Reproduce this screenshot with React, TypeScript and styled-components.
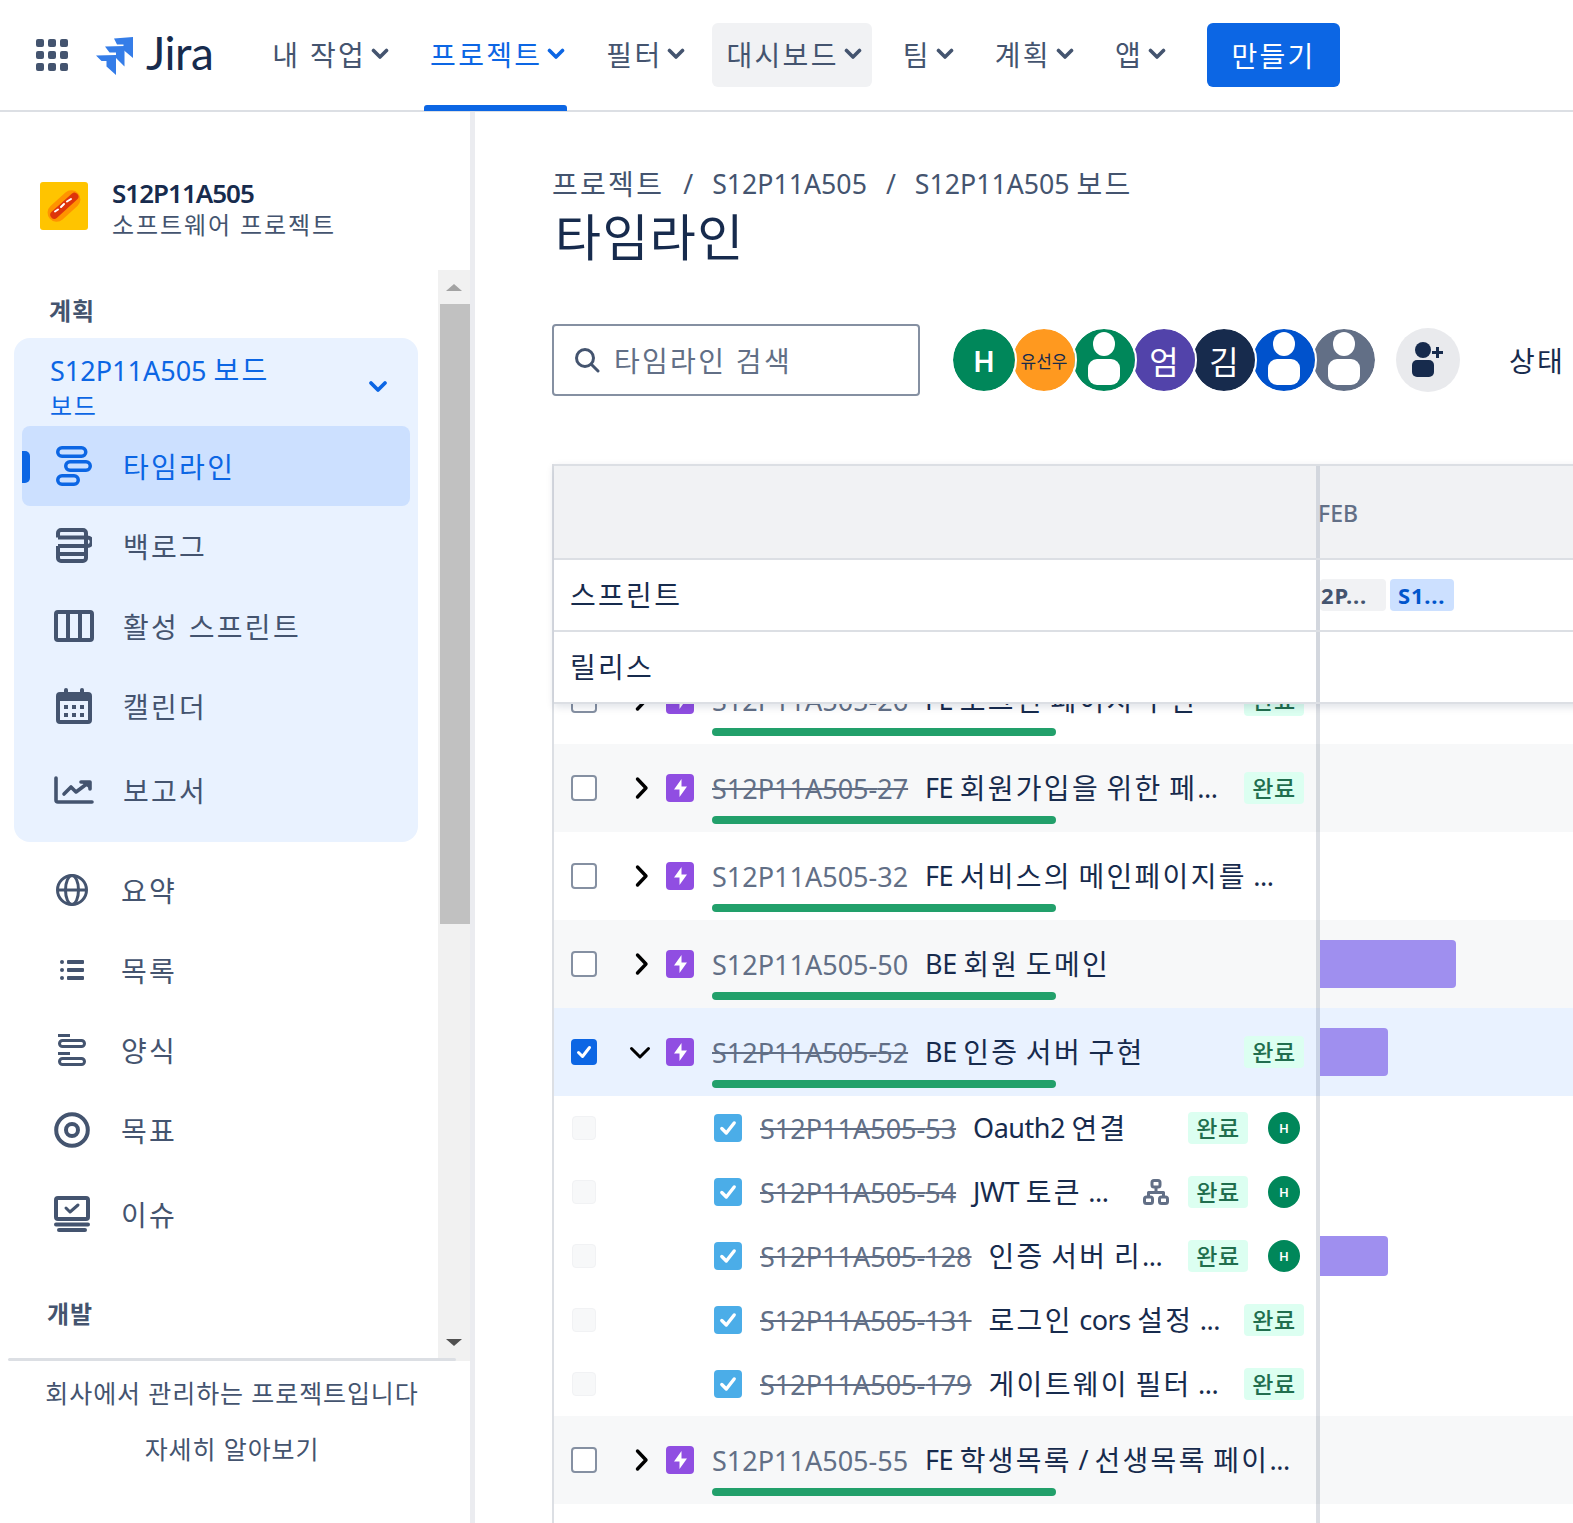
import React from "react";
import styled, { createGlobalStyle } from "styled-components";

const GlobalStyle = createGlobalStyle`
  html, body {
    margin: 0;
    padding: 0;
    background: #fff;
    font-family: "Noto Sans", "Noto Sans CJK KR", sans-serif;
    color: #172b4d;
  }
  * { box-sizing: border-box; }
`;

const Page = styled.div`
  width: 1573px;
  height: 1523px;
  overflow: hidden;
  display: flex;
  flex-direction: column;
`;

/* ---------- top bar ---------- */

const TopBar = styled.header`
  height: 112px;
  flex: none;
  display: flex;
  align-items: flex-start;
  padding: 23px 0 0 36px;
  border-bottom: 2px solid #dcdfe4;
`;

const AppGrid = styled.svg`
  width: 32px;
  height: 32px;
  margin: 16px 28px 0 0;
  flex: none;
`;

const Brand = styled.div`
  display: flex;
  align-items: center;
  height: 64px;
  gap: 12px;
  margin-right: 45px;
`;

const LogoMark = styled.svg`
  width: 38px;
  height: 38px;
  margin-top: 2px;
`;

const Wordmark = styled.span`
  padding-bottom: 4px;
  font-family: Lato, "Noto Sans", sans-serif;
  font-size: 46px;
  font-weight: 400;
  color: #172b4d;
  letter-spacing: -0.5px;
  line-height: 1;
`;

const NavList = styled.nav`
  display: flex;
  align-items: flex-start;
  gap: 17px;
`;

const NavItem = styled.div<{ $active?: boolean; $hover?: boolean }>`
  position: relative;
  display: flex;
  align-items: center;
  height: 64px;
  padding: 0 10px 2px 14px;
  gap: 5px;
  border-radius: 6px;
  font-size: 28px;
  letter-spacing: 2.3px;
  color: ${(p) => (p.$active ? "#0c66e4" : "#44546f")};
  background: ${(p) => (p.$hover ? "#f1f2f4" : "transparent")};
`;

const ActiveLine = styled.span`
  position: absolute;
  left: 8px;
  right: 8px;
  top: 82px;
  height: 6px;
  border-radius: 3px 3px 0 0;
  background: #0c66e4;
`;

const CreateButton = styled.button`
  width: 133px;
  height: 64px;
  margin-left: 31px;
  padding-bottom: 2px;
  border: 0;
  border-radius: 6px;
  background: #0c66e4;
  color: #fff;
  font: inherit;
  font-size: 28px;
  letter-spacing: 2.3px;
`;

/* ---------- layout ---------- */

const Body = styled.div`
  flex: 1;
  min-height: 0;
  display: flex;
`;

const Sidebar = styled.aside`
  width: 475px;
  flex: none;
  display: flex;
  flex-direction: column;
  border-right: 5px solid #ebecf0;
`;

const ProjectHead = styled.div`
  height: 158px;
  flex: none;
  display: flex;
  align-items: flex-start;
  padding: 70px 0 0 40px;
  gap: 24px;
`;

const ProjectLogo = styled.svg`
  width: 48px;
  height: 48px;
  flex: none;
`;

const ProjectText = styled.div`
  display: flex;
  flex-direction: column;
  margin-top: -4px;
`;

const ProjectName = styled.div`
  font-size: 26px;
  font-weight: 600;
  line-height: 30px;
  letter-spacing: -1px;
`;

const ProjectKind = styled.div`
  margin-top: 4px;
  font-size: 24px;
  line-height: 26px;
  letter-spacing: 1.9px;
  color: #44546f;
  white-space: nowrap;
`;

const NavScroller = styled.div`
  position: relative;
  height: 1091px;
  flex: none;
  display: flex;
  overflow: hidden;
`;

const NavContent = styled.div`
  width: 438px;
  flex: none;
  padding: 21px 0 0 14px;
`;

const SectionLabel = styled.div<{ $left: number; $gap?: number }>`
  height: 36px;
  margin-top: ${(p) => p.$gap ?? 0}px;
  padding: 2px 0 0 ${(p) => p.$left}px;
  font-size: 24px;
  font-weight: 700;
  line-height: 36px;
  letter-spacing: 0.8px;
  color: #44546f;
`;

const BoardGroup = styled.div`
  width: 404px;
  height: 504px;
  margin-top: 11px;
  padding: 8px 8px 0;
  border-radius: 16px;
  background: #e9f2ff;
`;

const BoardHead = styled.div`
  position: relative;
  height: 80px;
  padding: 5px 0 0 28px;
  color: #0c66e4;
`;

const BoardTitle = styled.div`
  font-size: 27px;
  line-height: 38px;
`;

const KoRun = styled.span`
  font-size: 28px;
  letter-spacing: 2.3px;
`;

const BoardSub = styled.div`
  font-size: 24px;
  line-height: 32px;
  letter-spacing: 1.6px;
`;

const BoardChevron = styled.svg`
  position: absolute;
  right: 22px;
  top: 34px;
  width: 20px;
  height: 14px;
`;

const BoardItem = styled.div<{ $active?: boolean; $height?: number }>`
  position: relative;
  display: flex;
  align-items: center;
  width: 388px;
  height: ${(p) => p.$height ?? 80}px;
  padding-left: 30px;
  border-radius: 8px;
  font-size: 28px;
  letter-spacing: 2.3px;
  color: ${(p) => (p.$active ? "#0c66e4" : "#44546f")};
  background: ${(p) => (p.$active ? "#cce0ff" : "transparent")};
`;

const ActiveMark = styled.span`
  position: absolute;
  left: 0;
  top: 25px;
  width: 8px;
  height: 32px;
  border-radius: 0 5px 5px 0;
  background: #0c66e4;
`;

const IconSlot = styled.span`
  width: 44px;
  height: 44px;
  flex: none;
  display: flex;
  align-items: center;
  justify-content: center;
  margin-right: 27px;
`;

const PlainItems = styled.div`
  padding-top: 8px;
`;

const PlainItem = styled.div<{ $height: number }>`
  display: flex;
  align-items: center;
  height: ${(p) => p.$height}px;
  padding-left: 36px;
  font-size: 28px;
  letter-spacing: 2.3px;
  color: #44546f;
`;

const Scrollbar = styled.div`
  position: relative;
  width: 32px;
  flex: none;
  display: flex;
  flex-direction: column;
  align-items: flex-end;
  background: #f1f1f1;
`;

const ScrollTop = styled.div`
  height: 34px;
  width: 100%;
  flex: none;
  display: flex;
  align-items: center;
  justify-content: center;
`;

const ScrollThumb = styled.div`
  width: 30px;
  height: 620px;
  flex: none;
  background: #c1c1c1;
`;

const ScrollDown = styled.div`
  margin-top: auto;
  height: 40px;
  width: 100%;
  display: flex;
  align-items: flex-start;
  justify-content: center;
  padding-top: 18px;
`;

const Arrow = styled.span<{ $down?: boolean }>`
  width: 0;
  height: 0;
  border-left: 8px solid transparent;
  border-right: 8px solid transparent;
  ${(p) => (p.$down ? "border-top: 7px solid #505050;" : "border-bottom: 7px solid #a3a3a3;")}
`;

const ScrollDivider = styled.div`
  position: absolute;
  left: 8px;
  bottom: 0;
  width: 448px;
  height: 3px;
  border-radius: 2px;
  background: #dcdfe4;
`;

const Foot = styled.div`
  padding-top: 4px;
  width: 464px;
  text-align: center;
  font-size: 25px;
  line-height: 56px;
  letter-spacing: 0.9px;
  color: #44546f;
  white-space: nowrap;
`;

/* ---------- main ---------- */

const Main = styled.main`
  flex: 1;
  min-width: 0;
  padding: 49px 0 0 77px;
`;

const Crumbs = styled.div`
  display: flex;
  align-items: center;
  height: 44px;
  font-size: 26.7px;
  color: #44546f;
  white-space: nowrap;
`;

const CrumbSep = styled.span`
  padding: 0 19px;
`;

const PageTitle = styled.h1`
  margin: 1px 0 0 3px;
  height: 62px;
  font-size: 50px;
  font-weight: 400;
  line-height: 62px;
  letter-spacing: 1.4px;
`;

const Toolbar = styled.div`
  display: flex;
  align-items: center;
  height: 72px;
  margin-top: 56px;
`;

const SearchBox = styled.div`
  width: 368px;
  height: 72px;
  flex: none;
  display: flex;
  align-items: center;
  gap: 14px;
  padding-left: 20px;
  border: 2px solid #8590a2;
  border-radius: 4px;
  font-size: 28px;
  letter-spacing: 2.3px;
  color: #626f86;
`;

const AvatarRow = styled.div`
  display: flex;
  margin-left: 31px;
`;

const Avatar = styled.div<{ $bg: string; $z: number; $small?: boolean; $dark?: boolean; $strong?: boolean }>`
  position: relative;
  z-index: ${(p) => p.$z};
  width: 66px;
  height: 66px;
  margin-right: -6px;
  flex: none;
  display: flex;
  align-items: center;
  justify-content: center;
  overflow: hidden;
  border-radius: 50%;
  border: 2px solid #fff;
  background: ${(p) => p.$bg};
  background-clip: padding-box;
  font-size: ${(p) => (p.$small ? 17 : p.$strong ? 29 : 32)}px;
  font-weight: ${(p) => (p.$strong ? 600 : 400)};
  color: ${(p) => (p.$dark ? "#172b4d" : "#fff")};
`;

const AddUser = styled.div`
  width: 64px;
  height: 64px;
  flex: none;
  margin-left: 25px;
  display: flex;
  align-items: center;
  justify-content: center;
  border-radius: 50%;
  background: #e9eaed;
`;

const StatusLabel = styled.div`
  margin-left: 49px;
  font-size: 28px;
  letter-spacing: 2.3px;
  white-space: nowrap;
`;

const Timeline = styled.section`
  margin-top: 68px;
  width: 1100px;
  height: 1100px;
  border-left: 2px solid #dcdfe4;
  display: flex;
  flex-direction: column;
`;

const Sticky = styled.div`
  position: relative;
  z-index: 2;
  flex: none;
  background: #fff;
  border-top: 2px solid #dcdfe4;
  box-shadow: 0 3px 8px rgba(9, 30, 66, 0.13);
`;

const HeadRow = styled.div<{ $height: number; $grey?: boolean }>`
  display: flex;
  height: ${(p) => p.$height}px;
  border-bottom: 2px solid #dcdfe4;
  background: ${(p) => (p.$grey ? "#f1f2f4" : "#fff")};
`;

const HeadName = styled.div`
  width: 766px;
  flex: none;
  display: flex;
  align-items: center;
  padding: 0 0 2px 16px;
  border-right: 4px solid #d3d7de;
  font-size: 28px;
  letter-spacing: 2.3px;
`;

const HeadSide = styled.div`
  flex: 1;
  display: flex;
  align-items: center;
`;

const Month = styled.span`
  margin: 2px 0 0 -2px;
  font-size: 23px;
  font-weight: 500;
  color: #626f86;
`;

const SprintChip = styled.span<{ $current?: boolean }>`
  height: 32px;
  display: flex;
  align-items: center;
  flex: none;
  border-radius: 4px;
  font-size: 22px;
  font-weight: 700;
  letter-spacing: 0.8px;
  background: ${(p) => (p.$current ? "#cce0ff" : "#f1f2f4")};
  color: ${(p) => (p.$current ? "#0055cc" : "#44546f")};
  width: ${(p) => (p.$current ? 64 : 66)}px;
  margin-left: ${(p) => (p.$current ? 4 : 0)}px;
  padding-left: ${(p) => (p.$current ? 8 : 1)}px;
`;

const Rows = styled.div`
  flex: 1;
  min-height: 0;
  overflow: hidden;
`;

const RowFrame = styled.div<{ $tone: string; $height: number }>`
  display: flex;
  align-items: flex-end;
  height: ${(p) => p.$height}px;
  overflow: hidden;
  background: ${(p) => p.$tone};
`;

const RowCell = styled.div<{ $height: number }>`
  width: 766px;
  flex: none;
  display: flex;
  height: ${(p) => p.$height}px;
  border-right: 4px solid rgba(9, 30, 66, 0.14);
`;

const EpicCell = styled(RowCell)`
  padding: 28px 12px 8px 17px;
`;

const ChildCell = styled(RowCell)`
  align-items: center;
  padding: 0 12px 0 18px;
`;

const SideCell = styled.div<{ $height: number }>`
  flex: 1;
  height: ${(p) => p.$height}px;
  display: flex;
  align-items: center;
`;

const TimeBar = styled.div<{ $w: number; $h: number }>`
  width: ${(p) => p.$w}px;
  height: ${(p) => p.$h}px;
  border-radius: 0 4px 4px 0;
  background: #9f8fef;
`;

const EpicControls = styled.div`
  height: 32px;
  flex: none;
  display: flex;
  align-items: center;
`;

const EmptyBox = styled.span`
  width: 26px;
  height: 26px;
  flex: none;
  border: 2px solid #8590a2;
  border-radius: 4px;
  background: #fff;
`;

const CheckedBox = styled.span`
  width: 26px;
  height: 26px;
  flex: none;
  display: flex;
  align-items: center;
  justify-content: center;
  border-radius: 4px;
  background: #0c66e4;
`;

const FadedBox = styled.span`
  width: 24px;
  height: 24px;
  flex: none;
  margin-right: 118px;
  border: 1px solid #f1f2f4;
  border-radius: 4px;
  background: #f7f8f9;
`;

const Toggle = styled.span<{ $open?: boolean }>`
  width: 69px;
  flex: none;
  display: flex;
  justify-content: center;
  padding: ${(p) => (p.$open ? "2px 4px 0 21px" : "0 0 0 21px")};
`;

const EpicIcon = styled.span`
  width: 28px;
  height: 28px;
  flex: none;
  margin-right: 18px;
  display: flex;
  align-items: center;
  justify-content: center;
  border-radius: 4px;
  background: #904ee2;
`;

const TaskIcon = styled.span`
  width: 28px;
  height: 28px;
  flex: none;
  margin-right: 18px;
  display: flex;
  align-items: center;
  justify-content: center;
  border-radius: 4px;
  background: #4bade8;
`;

const EpicBody = styled.div`
  flex: 1;
  min-width: 0;
`;

const Line = styled.div`
  display: flex;
  align-items: center;
  height: 32px;
  width: 100%;
`;

const IssueKey = styled.span<{ $done?: boolean }>`
  flex: none;
  margin-right: 17px;
  font-size: 27px;
  color: #626f86;
  white-space: nowrap;
  text-decoration: ${(p) => (p.$done ? "line-through" : "none")};
`;

const Summary = styled.span`
  flex: 1;
  min-width: 0;
  padding-bottom: 2px;
  font-size: 28px;
  letter-spacing: 2.3px;
  white-space: pre;
`;

const LatinRun = styled.span`
  font-size: 27px;
  letter-spacing: -0.5px;
  vertical-align: 1px;
`;

const Progress = styled.div`
  width: 344px;
  height: 8px;
  margin-top: 12px;
  border-radius: 4px;
  background: #22a06b;
`;

const Lozenge = styled.span`
  width: 60px;
  height: 32px;
  flex: none;
  display: flex;
  align-items: center;
  justify-content: center;
  padding-bottom: 2px;
  border-radius: 4px;
  background: #dcfff1;
  color: #216e4e;
  font-size: 23px;
  font-weight: 500;
  letter-spacing: 0.6px;
`;

const TinyAvatar = styled.span`
  width: 32px;
  height: 32px;
  flex: none;
  margin: 0 4px 0 20px;
  display: flex;
  align-items: center;
  justify-content: center;
  border-radius: 50%;
  background: #00875a;
  color: #fff;
  font-size: 13px;
  font-weight: 600;
`;

const LinkIcon = styled.svg`
  width: 26px;
  height: 26px;
  flex: none;
  margin-right: 19px;
`;

/* ---------- icons ---------- */

const Chevron = ({ color = "#44546f" }: { color?: string }) => (
  <svg width="18" height="12" viewBox="0 0 18 12" fill="none">
    <path d="M2.500 2.500 9 9l6.500-6.500" stroke={color} strokeWidth="3.600" strokeLinecap="round" strokeLinejoin="round" />
  </svg>
);

const JiraMark = () => (
  <LogoMark viewBox="0 0 38 38" fill="#357de8">
    <path d="M18 1.500 37 0v21l-9.500-8V7.500h-6.500z" />
    <path d="M9 9.500 28.500 9v20.500L20 21v-5.500h-6.500z" />
    <path d="M0 18.500 20 18v20l-9.500-8.500V24H5.500z" />
  </LogoMark>
);

const iconColor = "#44546f";

const TimelineIcon = () => (
  <svg width="36" height="40" viewBox="0 0 36 40" fill="none" stroke="#0c66e4" strokeWidth="3.500">
    <rect x="1.750" y="1.750" width="28" height="8.500" rx="4.250" />
    <rect x="9.750" y="15.750" width="24.500" height="8.500" rx="4.250" />
    <rect x="1.750" y="29.750" width="20.500" height="8.500" rx="4.250" />
  </svg>
);

const BacklogIcon = () => (
  <svg width="36" height="36" viewBox="0 0 36 36" fill="none" stroke={iconColor} strokeWidth="4">
    <path d="M2 9.500V5a3 3 0 0 1 3-3h22a3 3 0 0 1 3 3v25a3 3 0 0 1-3 3H5a3 3 0 0 1-3-3V18" />
    <path d="M2 9.500h29.500a4.250 4.250 0 0 1 0 8.500H2" />
    <path d="M2 26h28" />
  </svg>
);

const BoardIcon = () => (
  <svg width="40" height="32" viewBox="0 0 40 32" fill="none" stroke={iconColor} strokeWidth="4" strokeLinejoin="round">
    <rect x="2" y="2" width="36" height="28" rx="2" />
    <path d="M14 2v28M26 2v28" />
  </svg>
);

const CalendarIcon = () => (
  <svg width="36" height="36" viewBox="0 0 36 36" fill="none">
    <path d="M2 12V7a2 2 0 0 1 2-2h28a2 2 0 0 1 2 2v5" fill={iconColor} />
    <rect x="2" y="6" width="32" height="28" rx="2" stroke={iconColor} strokeWidth="4" />
    <rect x="2" y="6" width="32" height="7" fill={iconColor} />
    <rect x="8" y="0" width="4" height="6" rx="2" fill={iconColor} />
    <rect x="24" y="0" width="4" height="6" rx="2" fill={iconColor} />
    <g fill={iconColor}>
      <rect x="8" y="17" width="4" height="4" />
      <rect x="16" y="17" width="4" height="4" />
      <rect x="24" y="17" width="4" height="4" />
      <rect x="8" y="25" width="4" height="4" />
      <rect x="16" y="25" width="4" height="4" />
      <rect x="24" y="25" width="4" height="4" />
    </g>
  </svg>
);

const ReportsIcon = () => (
  <svg width="40" height="28" viewBox="0 0 40 28" fill="none" stroke={iconColor} strokeWidth="3.600" strokeLinecap="round" strokeLinejoin="round">
    <path d="M2 2v22a2 2 0 0 0 2 2h34" />
    <path d="M10 18l7-7 5 5 12-9" />
    <path d="M27 6h9v7" fill={iconColor} />
  </svg>
);

const GlobeIcon = () => (
  <svg width="32" height="32" viewBox="0 0 32 32" fill="none" stroke={iconColor} strokeWidth="3">
    <circle cx="16" cy="16" r="14.500" />
    <ellipse cx="16" cy="16" rx="6.500" ry="14.500" />
    <path d="M1.500 16h29" />
  </svg>
);

const ListIcon = () => (
  <svg width="24" height="22" viewBox="0 0 24 22" fill={iconColor}>
    <circle cx="2" cy="3" r="2" />
    <circle cx="2" cy="11" r="2" />
    <circle cx="2" cy="19" r="2" />
    <rect x="7" y="1" width="17" height="4" rx="1" />
    <rect x="7" y="9" width="17" height="4" rx="1" />
    <rect x="7" y="17" width="17" height="4" rx="1" />
  </svg>
);

const FormIcon = () => (
  <svg width="28" height="32" viewBox="0 0 28 32" fill="none" stroke={iconColor} strokeWidth="3">
    <rect x="0" y="0" width="12" height="3" fill={iconColor} stroke="none" />
    <rect x="1.500" y="6.500" width="25" height="6" rx="3" />
    <rect x="0" y="18" width="12" height="3" fill={iconColor} stroke="none" />
    <rect x="1.500" y="24.500" width="25" height="6" rx="3" />
  </svg>
);

const GoalIcon = () => (
  <svg width="36" height="36" viewBox="0 0 36 36" fill="none" stroke={iconColor}>
    <circle cx="18" cy="18" r="15.800" strokeWidth="4" />
    <circle cx="18" cy="18" r="6" strokeWidth="4" />
  </svg>
);

const IssuesIcon = () => (
  <svg width="36" height="36" viewBox="0 0 36 36" fill="none" stroke={iconColor} strokeLinecap="round" strokeLinejoin="round">
    <rect x="2" y="2" width="32" height="21" rx="2" strokeWidth="4" />
    <path d="M12 12l4 4 8-7" strokeWidth="3" />
    <path d="M2 28.500h32" strokeWidth="4" />
    <path d="M5 34h26" strokeWidth="4" />
  </svg>
);

const SearchIcon = () => (
  <svg width="26" height="26" viewBox="0 0 26 26" fill="none" stroke="#44546f" strokeWidth="3" strokeLinecap="round">
    <circle cx="11" cy="11" r="8.500" />
    <path d="M17.500 17.500 24 24" />
  </svg>
);

const PersonIcon = ({ fill = "#fff" }: { fill?: string }) => (
  <svg width="32" height="56" viewBox="0 0 32 56" fill={fill}>
    <ellipse cx="16" cy="12" rx="11" ry="12" />
    <rect x="0" y="27" width="32" height="26" rx="9" />
  </svg>
);

const AddUserIcon = () => (
  <svg width="36" height="36" viewBox="0 0 36 36" fill="#172b4d">
    <ellipse cx="13" cy="8" rx="8" ry="8" />
    <rect x="2" y="18" width="22" height="17" rx="5" />
    <path d="M26 5h3v4h4v3h-4v4h-3v-4h-4V9h4z" />
  </svg>
);

const CheckMark = ({ w = 16 }: { w?: number }) => (
  <svg width={w} height={w} viewBox="0 0 16 16" fill="none" stroke="#fff" strokeWidth="3" strokeLinecap="round" strokeLinejoin="round">
    <path d="M2.500 8.500 6.500 12.500 13.500 3.500" />
  </svg>
);

const Bolt = () => (
  <svg width="13" height="18" viewBox="0 0 13 18" fill="#fff">
    <path d="M7.500 0 0 10.500h5.500V18L13 7.500H7.500z" />
  </svg>
);

const ToggleRight = () => (
  <svg width="14" height="24" viewBox="0 0 14 24" fill="none" stroke="#000" strokeWidth="3.400" strokeLinecap="round" strokeLinejoin="round">
    <path d="M2.500 3 11 12 2.500 21" />
  </svg>
);

const ToggleDown = () => (
  <svg width="22" height="14" viewBox="0 0 22 14" fill="none" stroke="#000" strokeWidth="3" strokeLinecap="round" strokeLinejoin="round">
    <path d="M2.500 2.500 11 11l8.500-8.500" />
  </svg>
);

/* ---------- data ---------- */

const boardItems = [
  { label: "타임라인", icon: <TimelineIcon />, active: true },
  { label: "백로그", icon: <BacklogIcon /> },
  { label: "활성 스프린트", icon: <BoardIcon /> },
  { label: "캘린더", icon: <CalendarIcon /> },
  { label: "보고서", icon: <ReportsIcon />, height: 87 },
];

const plainItems = [
  { label: "요약", icon: <GlobeIcon />, height: 80 },
  { label: "목록", icon: <ListIcon />, height: 80 },
  { label: "양식", icon: <FormIcon />, height: 80 },
  { label: "목표", icon: <GoalIcon />, height: 80 },
  { label: "이슈", icon: <IssuesIcon />, height: 88 },
];

const avatars = [
  { bg: "#00875a", text: "H", strong: true },
  { bg: "#ff991f", text: "유선우", small: true, dark: true },
  { bg: "#00875a" },
  { bg: "#5243aa", text: "엄" },
  { bg: "#172b4d", text: "김" },
  { bg: "#0052cc" },
  { bg: "#626f86" },
];

type Epic = {
  kind: "epic";
  id: number;
  text: string;
  done?: boolean;
  tone: string;
  height?: number;
  open?: boolean;
  checked?: boolean;
  bar?: number;
};

type Child = {
  kind: "child";
  id: number;
  text: string;
  assigned?: boolean;
  linked?: boolean;
  bar?: number;
};

const rows: (Epic | Child)[] = [
  { kind: "epic", id: 26, text: "FE 로그인 페이지 구현", done: true, tone: "#fff", height: 40 },
  { kind: "epic", id: 27, text: "FE 회원가입을 위한 페...", done: true, tone: "#f7f8f9" },
  { kind: "epic", id: 32, text: "FE 서비스의 메인페이지를 ...", tone: "#fff" },
  { kind: "epic", id: 50, text: "BE 회원 도메인", tone: "#f7f8f9", bar: 136 },
  { kind: "epic", id: 52, text: "BE 인증 서버 구현", done: true, tone: "#e9f2ff", open: true, checked: true, bar: 68 },
  { kind: "child", id: 53, text: "Oauth2 연결", assigned: true },
  { kind: "child", id: 54, text: "JWT 토큰 ...", assigned: true, linked: true },
  { kind: "child", id: 128, text: "인증 서버 리...", assigned: true, bar: 68 },
  { kind: "child", id: 131, text: "로그인 cors 설정 ..." },
  { kind: "child", id: 179, text: "게이트웨이 필터 ..." },
  { kind: "epic", id: 55, text: "FE 학생목록 / 선생목록 페이...", tone: "#f7f8f9" },
];

const navLabels = [
  { label: "내 작업" },
  { label: "프로젝트", active: true },
  { label: "필터" },
  { label: "대시보드", hover: true },
  { label: "팀" },
  { label: "계획" },
  { label: "앱" },
];

// latin words and dots sit tighter than the hangul around them
const mixed = (text: string) =>
  text.split(/([A-Za-z0-9 /.]+)/).map((part, i) =>
    /[A-Za-z0-9 /.]/.test(part) ? <LatinRun key={i}>{part}</LatinRun> : part
  );

function EpicRow({ row }: { row: Epic }) {
  const height = row.height ?? 88;
  return (
    <RowFrame $tone={row.tone} $height={height}>
      <EpicCell $height={88}>
        <EpicControls>
          {row.checked ? (
            <CheckedBox>
              <CheckMark />
            </CheckedBox>
          ) : (
            <EmptyBox />
          )}
          <Toggle $open={row.open}>{row.open ? <ToggleDown /> : <ToggleRight />}</Toggle>
          <EpicIcon>
            <Bolt />
          </EpicIcon>
        </EpicControls>
        <EpicBody>
          <Line>
            <IssueKey $done={row.done}>S12P11A505-{row.id}</IssueKey>
            <Summary>{mixed(row.text)}</Summary>
            {row.done && <Lozenge>완료</Lozenge>}
          </Line>
          <Progress />
        </EpicBody>
      </EpicCell>
      <SideCell $height={88}>{row.bar && <TimeBar $w={row.bar} $h={48} />}</SideCell>
    </RowFrame>
  );
}

function ChildRow({ row }: { row: Child }) {
  return (
    <RowFrame $tone="#fff" $height={64}>
      <ChildCell $height={64}>
        <FadedBox />
        <TaskIcon>
          <CheckMark w={18} />
        </TaskIcon>
        <IssueKey $done>S12P11A505-{row.id}</IssueKey>
        <Summary>{mixed(row.text)}</Summary>
        {row.linked && (
          <LinkIcon viewBox="0 0 26 26" fill="none" stroke="#626f86" strokeWidth="3" strokeLinejoin="round">
            <rect x="9" y="1.500" width="8" height="6.500" rx="2" />
            <rect x="1.500" y="18" width="8" height="6.500" rx="2" />
            <rect x="16.500" y="18" width="8" height="6.500" rx="2" />
            <path d="M13 8v5M5.500 18v-4.500h15V18" />
          </LinkIcon>
        )}
        <Lozenge>완료</Lozenge>
        {row.assigned && <TinyAvatar>H</TinyAvatar>}
      </ChildCell>
      <SideCell $height={64}>{row.bar && <TimeBar $w={row.bar} $h={40} />}</SideCell>
    </RowFrame>
  );
}

export default function App() {
  return (
    <Page>
      <GlobalStyle />
      <TopBar>
        <AppGrid viewBox="0 0 32 32" fill="#44546f">
          {[0, 12, 24].flatMap((y) =>
            [0, 12, 24].map((x) => <rect key={`${x}-${y}`} x={x} y={y} width="8" height="8" rx="2" />)
          )}
        </AppGrid>
        <Brand>
          <JiraMark />
          <Wordmark>Jira</Wordmark>
        </Brand>
        <NavList>
          {navLabels.map((n) => (
            <NavItem key={n.label} $active={n.active} $hover={n.hover}>
              {n.label}
              <Chevron color={n.active ? "#0c66e4" : "#44546f"} />
              {n.active && <ActiveLine />}
            </NavItem>
          ))}
        </NavList>
        <CreateButton>만들기</CreateButton>
      </TopBar>
      <Body>
        <Sidebar>
          <ProjectHead>
            <ProjectLogo viewBox="0 0 48 48">
              <rect width="48" height="48" rx="3" fill="#ffc400" />
              <rect x="5" y="15" width="38" height="18" rx="9" fill="#ff8b00" opacity="0.85" transform="rotate(-42 24 24)" />
              <rect x="7" y="20" width="35" height="8" rx="4" fill="#de350b" transform="rotate(-42 24 24)" />
              <path d="M15 29.500l3-2M21 25l3-3M27 19.500l4-2.500" stroke="#fff" strokeWidth="2" strokeLinecap="round" />
            </ProjectLogo>
            <ProjectText>
              <ProjectName>S12P11A505</ProjectName>
              <ProjectKind>소프트웨어 프로젝트</ProjectKind>
            </ProjectText>
          </ProjectHead>
          <NavScroller>
            <NavContent>
              <SectionLabel $left={35}>계획</SectionLabel>
              <BoardGroup>
                <BoardHead>
                  <BoardTitle>
                    S12P11A505 <KoRun>보드</KoRun>
                  </BoardTitle>
                  <BoardSub>보드</BoardSub>
                  <BoardChevron viewBox="0 0 20 14" fill="none" stroke="#0c66e4" strokeWidth="3.800" strokeLinecap="round" strokeLinejoin="round">
                    <path d="M3 3l7 7 7-7" />
                  </BoardChevron>
                </BoardHead>
                {boardItems.map((item) => (
                  <BoardItem key={item.label} $active={item.active} $height={item.height}>
                    {item.active && <ActiveMark />}
                    <IconSlot>{item.icon}</IconSlot>
                    {item.label}
                  </BoardItem>
                ))}
              </BoardGroup>
              <PlainItems>
                {plainItems.map((item) => (
                  <PlainItem key={item.label} $height={item.height}>
                    <IconSlot>{item.icon}</IconSlot>
                    {item.label}
                  </PlainItem>
                ))}
              </PlainItems>
              <SectionLabel $left={33} $gap={36}>개발</SectionLabel>
            </NavContent>
            <Scrollbar>
              <ScrollTop>
                <Arrow />
              </ScrollTop>
              <ScrollThumb />
              <ScrollDown>
                <Arrow $down />
              </ScrollDown>
            </Scrollbar>
            <ScrollDivider />
          </NavScroller>
          <Foot>
            회사에서 관리하는 프로젝트입니다
            <br />
            자세히 알아보기
          </Foot>
        </Sidebar>
        <Main>
          <Crumbs>
            <KoRun>프로젝트</KoRun>
            <CrumbSep>/</CrumbSep>
            S12P11A505
            <CrumbSep>/</CrumbSep>
            S12P11A505&nbsp;<KoRun>보드</KoRun>
          </Crumbs>
          <PageTitle>타임라인</PageTitle>
          <Toolbar>
            <SearchBox>
              <SearchIcon />
              타임라인 검색
            </SearchBox>
            <AvatarRow>
              {avatars.map((a, i) => (
                <Avatar key={i} $bg={a.bg} $z={avatars.length - i} $small={a.small} $dark={a.dark} $strong={a.strong}>
                  {a.text ?? <PersonIcon />}
                </Avatar>
              ))}
            </AvatarRow>
            <AddUser>
              <AddUserIcon />
            </AddUser>
            <StatusLabel>상태</StatusLabel>
          </Toolbar>
          <Timeline>
            <Sticky>
              <HeadRow $height={94} $grey>
                <HeadName />
                <HeadSide>
                  <Month>FEB</Month>
                </HeadSide>
              </HeadRow>
              <HeadRow $height={72}>
                <HeadName>스프린트</HeadName>
                <HeadSide>
                  <SprintChip>2P...</SprintChip>
                  <SprintChip $current>S1...</SprintChip>
                </HeadSide>
              </HeadRow>
              <HeadRow $height={72}>
                <HeadName>릴리스</HeadName>
                <HeadSide />
              </HeadRow>
            </Sticky>
            <Rows>
              {rows.map((row) =>
                row.kind === "epic" ? <EpicRow key={row.id} row={row} /> : <ChildRow key={row.id} row={row} />
              )}
              <RowFrame $tone="#fff" $height={60}>
                <RowCell $height={60} />
              </RowFrame>
            </Rows>
          </Timeline>
        </Main>
      </Body>
    </Page>
  );
}
